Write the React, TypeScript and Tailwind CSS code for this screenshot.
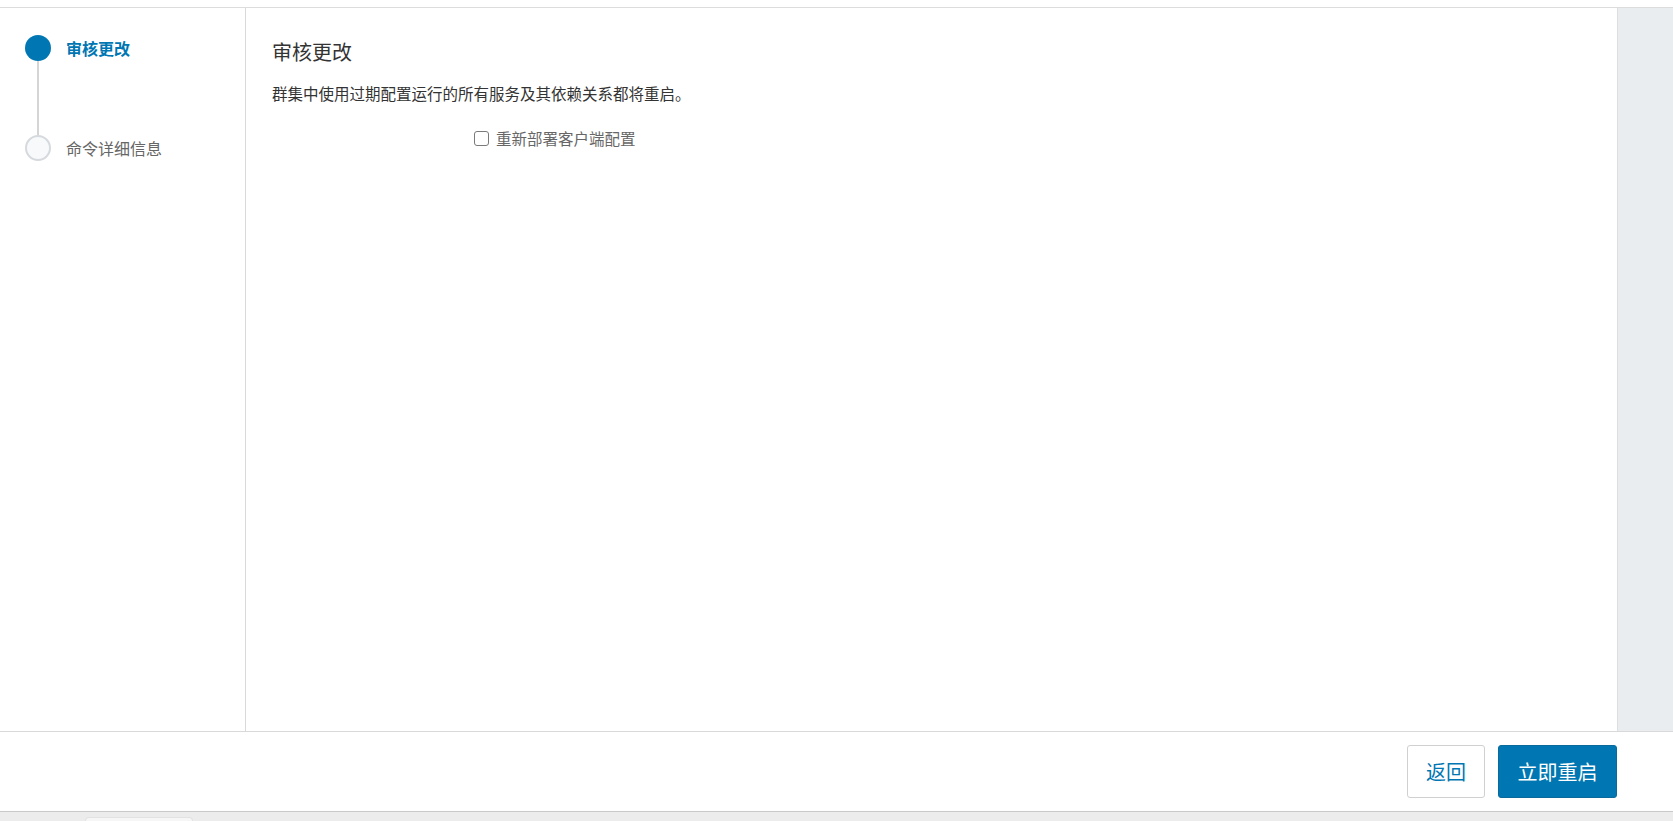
import React from 'react';

const steps = [
    { label: '审核更改', active: true },
    { label: '命令详细信息', active: false },
];

export default function App() {
    return (
        <div
            className="flex h-[821px] w-full flex-col overflow-hidden bg-white text-[#333]"
            style={{ fontFamily: '"Noto Sans CJK SC", "Liberation Sans", sans-serif' }}
        >
            <div className="h-[8px] shrink-0 border-b border-[#dcdcdc] bg-white" />

            <div className="flex min-h-0 flex-1">
                {/* steps */}
                <aside className="w-[246px] shrink-0 border-r border-[#d9d9d9] px-[25px] pt-[27px]">
                    {steps.map((s, i) => (
                        <div key={s.label}>
                            <div className="flex items-center gap-[15px]">
                                {s.active ? (
                                    <span className="h-[26px] w-[26px] shrink-0 rounded-full bg-[#0077b2]" />
                                ) : (
                                    <span className="h-[26px] w-[26px] shrink-0 rounded-full border-2 border-[#d6d9dd] bg-[#f7f9fb]" />
                                )}
                                <span
                                    className={
                                        s.active
                                            ? 'text-[16px] font-bold leading-[26px] text-[#0077b2]'
                                            : 'text-[16px] leading-[26px] text-[#666]'
                                    }
                                >
                                    {s.label}
                                </span>
                            </div>
                            {i < steps.length - 1 && <div className="ml-[12px] h-[74px] w-[2px] bg-[#d5d5d5]" />}
                        </div>
                    ))}
                </aside>

                {/* main */}
                <main className="min-w-0 flex-1 pl-[26px] pt-[30px]">
                    <h2 className="text-[20px] font-normal leading-[28px] text-[#333]">审核更改</h2>
                    <p className="mt-[16px] text-[15.5px] leading-[22px] text-[#333]">
                        群集中使用过期配置运行的所有服务及其依赖关系都将重启。
                    </p>
                    <label className="ml-[202px] mt-[23px] flex items-center gap-[7px] text-[15.5px] leading-[22px] text-[#666]">
                        <span className="h-[15px] w-[15px] shrink-0 rounded-[3px] border border-[#7a7a7a] bg-white" />
                        重新部署客户端配置
                    </label>
                </main>

                <div className="w-[56px] shrink-0 border-l border-[#dcdfe2] bg-[#e9edf0]" />
            </div>

            {/* footer */}
            <footer className="flex h-[80px] shrink-0 items-center justify-end gap-[13px] border-t border-[#d9d9d9] bg-white pr-[56px]">
                <button className="h-[53px] w-[78px] rounded-[3px] border border-[#d0d0d0] bg-white text-[20px] text-[#0077b2]">
                    返回
                </button>
                <button className="h-[53px] w-[119px] rounded-[3px] border border-[#0a6a9c] bg-[#0077b2] text-[20px] text-white">
                    立即重启
                </button>
            </footer>

            <div className="flex h-[10px] shrink-0 items-end border-t border-[#c8c8c8] bg-[#ececec] pl-[85px]">
                <div className="h-[4px] w-[108px] rounded-t-[4px] border border-b-0 border-[#e2e2e2] bg-[#f6f6f6]" />
            </div>
        </div>
    );
}
